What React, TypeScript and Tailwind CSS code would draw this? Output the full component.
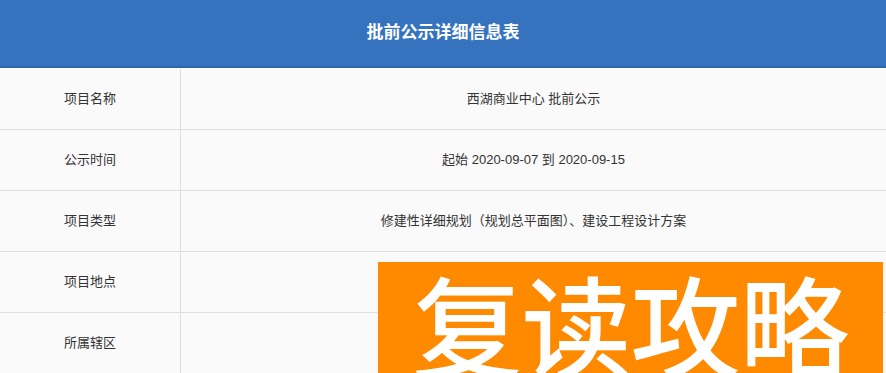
import React from 'react';

const rows = [
    { label: '项目名称', value: '西湖商业中心 批前公示' },
    { label: '公示时间', value: '起始 2020-09-07 到 2020-09-15' },
    { label: '项目类型', value: '修建性详细规划（规划总平面图）、建设工程设计方案' },
    { label: '项目地点', value: '' },
    { label: '所属辖区', value: '' }
];

export default function App() {
    return (
        <div
            className="relative w-[886px] h-[373px] overflow-hidden bg-white text-[#333]"
            style={{ fontFamily: '"Liberation Sans", "Noto Sans CJK SC", sans-serif' }}
        >
            <div className="h-[68px] bg-[#3673bf] border-b-2 border-[#2d65ab] flex items-center justify-center">
                <h1 className="text-white text-[17px] font-bold">批前公示详细信息表</h1>
            </div>
            <div className="mt-px">
                {rows.map((row, idx) => (
                    <div key={idx} className="flex h-[61px] border-b border-[#dedede] bg-[#fafafa]">
                        <div className="w-[181px] shrink-0 border-r border-[#dedede] flex items-center justify-center text-[13px]">
                            {row.label}
                        </div>
                        <div className="flex-1 flex items-center justify-center text-[13px]">{row.value}</div>
                    </div>
                ))}
            </div>
            {/* watermark banner laid over the table */}
            <div className="absolute left-[378px] top-[262px] w-[505px] h-[130px] bg-[#ff8a00] flex justify-center">
                <span
                    className="text-white text-[110px] font-medium leading-none mt-[5px] tracking-[-1px]"
                    style={{ fontFamily: '"Noto Sans CJK SC", sans-serif' }}
                >
                    复读攻略
                </span>
            </div>
        </div>
    );
}
